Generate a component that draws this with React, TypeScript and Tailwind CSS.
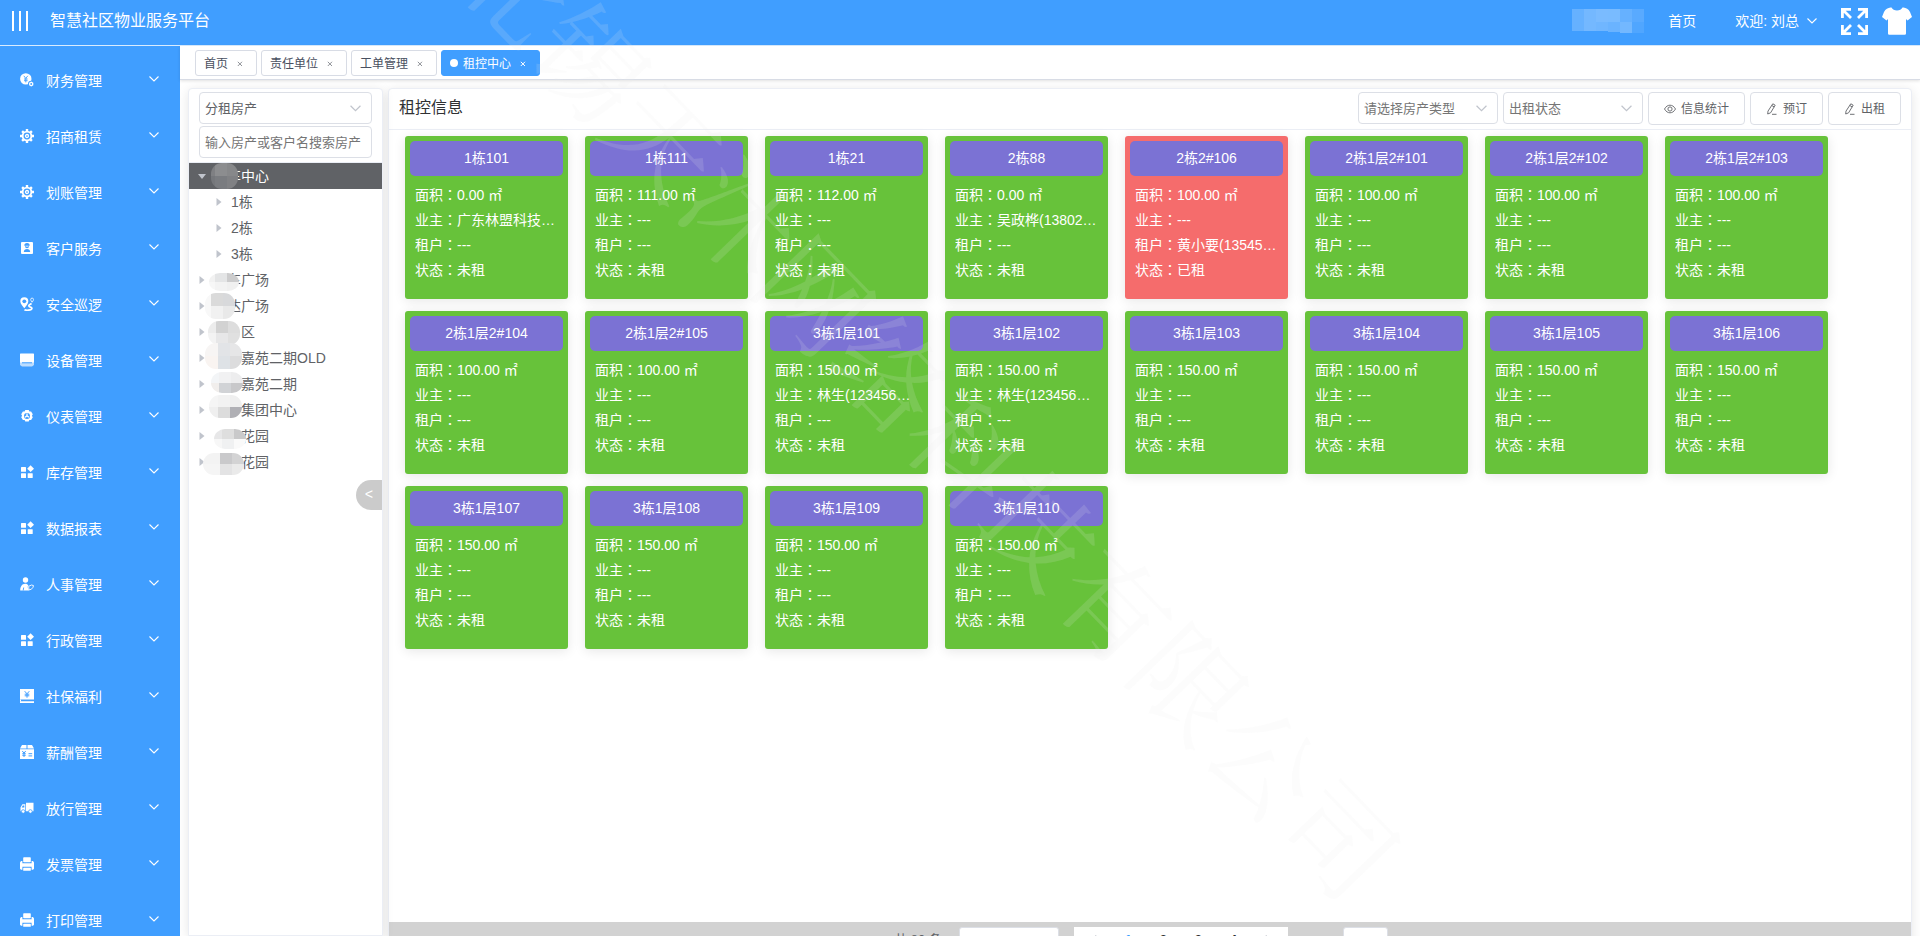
import React from 'react';

type IconName =
  | 'finance' | 'gear' | 'customer' | 'patrol' | 'device' | 'meter' | 'blocks'
  | 'staff' | 'welfare' | 'salary' | 'truck' | 'printer';

const BLUE = '#409eff';

const shapes: Record<IconName, React.ReactNode> = {
  finance: (
    <>
      <circle cx="5.8" cy="5.9" r="5.7" />
      <path d="M3.8 2.8l2 2.6 2-2.6M5.8 5.4v4M4 6h3.6M4 7.7h3.6" stroke={BLUE} strokeWidth="0.9" fill="none" />
      <circle cx="11.2" cy="11" r="3.2" fill={BLUE} />
      <path d="M11.2 8.6l2.1 1.2v2.4l-2.1 1.2-2.1-1.2V9.8z" />
      <circle cx="11.2" cy="11" r="0.9" fill={BLUE} />
    </>
  ),
  gear: (
    <>
      <circle cx="7" cy="7" r="4.4" fill="none" stroke="currentColor" strokeWidth="1.9" />
      <path
        d="M7 0v2.4M7 11.6v2.4M0 7h2.4M11.6 7H14M2.1 2.1l1.6 1.6M10.3 10.3l1.6 1.6M2.1 11.9l1.6-1.6M10.3 3.7l1.6-1.6"
        stroke="currentColor"
        strokeWidth="2.4"
      />
      <circle cx="7" cy="7" r="1.5" fill="none" stroke="currentColor" strokeWidth="1.3" />
    </>
  ),
  customer: (
    <>
      <rect x="1" y="1" width="12" height="12" rx="1" />
      <circle cx="7" cy="5.3" r="2" fill={BLUE} />
      <path d="M4.3 4.8a2.7 2.7 0 015.4 0M3.8 11c0-2 1.4-3 3.2-3s3.2 1 3.2 3z" fill={BLUE} />
      <path d="M5.5 5.2h3" stroke="currentColor" strokeWidth="0.8" />
    </>
  ),
  patrol: (
    <>
      <path d="M4.3 0.3a4 4 0 014 4c0 2.6-2.6 5.2-4 6.9-1.4-1.7-4-4.3-4-6.9a4 4 0 014-4z" />
      <circle cx="4.3" cy="4.3" r="1.9" fill={BLUE} />
      <path d="M4.5 12.6c1 .9 7 1 7.4-1 .3-1.9-3.2-1.1-3.1-2.9.1-1 1.5-1.3 2.8-2.2" fill="none" stroke="currentColor" strokeWidth="1.7" />
      <path d="M12.1 5.2c-.8-1-1.4-1.7-1.4-2.7a1.4 1.4 0 012.8 0c0 1-.6 1.7-1.4 2.7z" fill="none" stroke="currentColor" strokeWidth="0.8" />
    </>
  ),
  device: (
    <>
      <rect x="0" y="0.5" width="14" height="9" rx="0.6" />
      <path d="M0 9h14v3l-2 1.5H2L0 12z" opacity="0.65" />
      <path d="M2 9.8h10" stroke={BLUE} strokeWidth="1" />
    </>
  ),
  meter: (
    <>
      <path d="M5.3 1h3.4l.7 1.5 1.7-.1 1.7 2.9-.9 1.4.9 1.5-1.7 2.9-1.7-.1-.7 1.6H5.3l-.7-1.6-1.7.1-1.7-2.9.9-1.5-.9-1.4 1.7-2.9 1.7.1z" />
      <circle cx="7" cy="6.9" r="3" fill={BLUE} />
      <path d="M7 4.6v2.6M7 6.9l2 1.3M7 6.9L4.9 8.2" stroke="currentColor" strokeWidth="1.3" />
    </>
  ),
  blocks: (
    <>
      <rect x="1" y="2" width="5" height="4.8" rx="0.5" />
      <rect x="1" y="8.3" width="5" height="4.7" rx="0.5" />
      <rect x="7.7" y="8.3" width="5" height="4.7" rx="0.5" />
      <path d="M10.6 0.3l3.4 3.4-3.4 3.4-3.4-3.4z" />
    </>
  ),
  staff: (
    <>
      <circle cx="5.5" cy="3" r="2.7" />
      <path d="M0.2 13.5c0-4 1.8-6.8 5-6.8 1.5 0 2.4.6 3.2 1.5l-.8 1.7 1.6 3.6z" />
      <path d="M3.2 13.5l.5-3" stroke={BLUE} strokeWidth="0.9" />
      <path d="M8.6 9.3l3-1.3 1.9.6-.5 1.7-1.7 2-2.3.6z" fill="none" stroke="currentColor" strokeWidth="0.9" />
    </>
  ),
  welfare: (
    <>
      <path d="M0 0h14v10.5H0zM0 12.2h14V14H0z" />
      <path d="M0.5 10.5v2" stroke="currentColor" />
      <path d="M4.7 2.2L7 4.8l2.3-2.6M7 4.8v3.9M4.7 5.2h4.6M4.7 6.8h4.6" fill="none" stroke={BLUE} strokeWidth="1" />
    </>
  ),
  salary: (
    <>
      <path d="M2 0h4.5v3.5H0zM7.5 0H12l2 3.5H7.5zM0 4.2h14V14H0z" />
      <path d="M2.3 6l1.7 2.2L5.7 6M4 8.2V12M2.3 8.7h3.4M2.3 10.3h3.4M8.5 8.7h3.7M8.5 10.9h3.7" fill="none" stroke={BLUE} strokeWidth="1" />
    </>
  ),
  truck: (
    <>
      <path d="M6 1.8h7.5v8.5H6zM5.3 3.2v7.1H0.5V6.4l1.9-3.2z" />
      <path d="M2.8 4.5h1.5v2H1.7z" fill={BLUE} />
      <circle cx="3.2" cy="10.5" r="1.8" fill="currentColor" stroke={BLUE} strokeWidth="0.8" />
      <circle cx="10.4" cy="10.5" r="1.8" fill="currentColor" stroke={BLUE} strokeWidth="0.8" />
    </>
  ),
  printer: (
    <>
      <rect x="3.2" y="0.3" width="7.6" height="5" rx="0.8" />
      <path d="M1 4h1.4v2.2h9.2V4H13l1 1.5v6.3l-1 .9h-1.4V9.8H2.4v2.9H1l-1-.9V5.5z" />
      <rect x="3.2" y="10.8" width="7.6" height="3" rx="0.6" />
    </>
  ),
};

function MenuIcon({ name }: { name: IconName }) {
  return (
    <svg viewBox="0 0 14 14" className="h-3.5 w-3.5 shrink-0" fill="currentColor" aria-hidden="true">
      {shapes[name]}
    </svg>
  );
}

function Chevron({ className }: { className: string }) {
  return (
    <svg viewBox="0 0 10 6" className={className} fill="none" stroke="currentColor" strokeWidth="1.1" aria-hidden="true">
      <path d="M0.5 0.5L5 5l4.5-4.5" />
    </svg>
  );
}

const menu: [string, IconName][] = [
  ['财务管理', 'finance'],
  ['招商租赁', 'gear'],
  ['划账管理', 'gear'],
  ['客户服务', 'customer'],
  ['安全巡逻', 'patrol'],
  ['设备管理', 'device'],
  ['仪表管理', 'meter'],
  ['库存管理', 'blocks'],
  ['数据报表', 'blocks'],
  ['人事管理', 'staff'],
  ['行政管理', 'blocks'],
  ['社保福利', 'welfare'],
  ['薪酬管理', 'salary'],
  ['放行管理', 'truck'],
  ['发票管理', 'printer'],
  ['打印管理', 'printer'],
];

const tabs = ['首页', '责任单位', '工单管理', '租控中心'];

type Blob = { x: number; w: number; y: number; h: number; cells: [string, string, string, string, string, string] };
type Site = { name: string; covered?: string; blob: Blob };

const center: Site = {
  name: '中心',
  covered: '车',
  blob: { x: -2, w: 27, y: 0, h: 26, cells: ['#7f8083', '#8c8d8f', '#87888a', '#75777b', '#7a7c80', '#808184'] },
};

const sites: Site[] = [
  { name: '广场', covered: '车', blob: { x: -4, w: 30, y: 6, h: 18, cells: ['#f2f2f2', '#e4e5e6', '#cccccd', '#f7f7f7', '#f3f3f3', '#f0f0f0'] } },
  { name: '广场', covered: '达', blob: { x: -8, w: 30, y: 0, h: 26, cells: ['#f8f8f8', '#dadada', '#d8d9db', '#f8f8f8', '#f1f1f1', '#e9e9e9'] } },
  { name: '区', blob: { x: -5, w: 32, y: 2, h: 24, cells: ['#ececec', '#d2d2d2', '#dddddd', '#f3f3f3', '#e7e7e8', '#e0e0e0'] } },
  { name: '嘉苑二期OLD', blob: { x: -8, w: 37, y: -2, h: 26, cells: ['#f7f5f4', '#e2e4e7', '#e6e6e7', '#f9f4f1', '#dee2e6', '#dcdcdd'] } },
  { name: '嘉苑二期', blob: { x: -2, w: 32, y: 1, h: 21, cells: ['#f3f5f7', '#f1f1f2', '#ededee', '#f1eeec', '#d1d3d6', '#c8c8ca'] } },
  { name: '集团中心', blob: { x: -4, w: 33, y: -2, h: 23, cells: ['#f5f5f5', '#f2f2f2', '#efefef', '#efefef', '#dcdcdc', '#b0b0b5'] } },
  { name: '花园', blob: { x: 1, w: 32, y: 6, h: 20, cells: ['#e7e7e8', '#dedede', '#c9c9ca', '#f7f7f7', '#f0f1f2', '#fafafa'] } },
  { name: '花园', blob: { x: -10, w: 41, y: 4, h: 22, cells: ['#f3f3f3', '#c9c9cb', '#d3d3d4', '#f5f5f5', '#e3e3e4', '#eaeaea'] } },
];

function SiteName({ id, site }: { id: string; site: Site }) {
  const { x, w, y, h, cells } = site.blob;
  const first = Math.max(w - 24, 4);
  const cols = [[x, first], [x + first, 12], [x + first + 12, w - first - 12]];
  const split = Math.round(h / 2);
  return (
    <span className="ml-[7px] flex items-center">
      <svg className="relative z-10 h-[26px] w-7 shrink-0 overflow-visible" viewBox="0 0 28 26" aria-hidden="true">
        <clipPath id={id}>
          <rect x={x} y={y} width={w} height={h} rx="11" />
        </clipPath>
        <g clipPath={`url(#${id})`}>
          {cells.map((fill, i) => (
            <rect
              key={i}
              x={cols[i % 3][0]}
              y={i < 3 ? y : y + split}
              width={cols[i % 3][1]}
              height={i < 3 ? split : h - split}
              fill={fill}
            />
          ))}
        </g>
      </svg>
      {site.covered && <span className="-ml-3.5">{site.covered}</span>}
      <span>{site.name}</span>
    </span>
  );
}

function Caret({ open }: { open?: boolean }) {
  return (
    <svg viewBox="0 0 8 8" className="h-2 w-2 shrink-0" fill="#c0c4cc" aria-hidden="true">
      {open ? <path d="M0 2h8L4 7z" /> : <path d="M1.5 0v8L6.5 4z" />}
    </svg>
  );
}

type Room = { name: string; area: string; owner?: string; tenant?: string; rented?: boolean };

const rooms: Room[] = [
  { name: '1栋101', area: '0.00', owner: '广东林盟科技有限公司' },
  { name: '1栋111', area: '111.00' },
  { name: '1栋21', area: '112.00' },
  { name: '2栋88', area: '0.00', owner: '吴政桦(13802000000)' },
  { name: '2栋2#106', area: '100.00', tenant: '黄小要(13545000000)', rented: true },
  { name: '2栋1层2#101', area: '100.00' },
  { name: '2栋1层2#102', area: '100.00' },
  { name: '2栋1层2#103', area: '100.00' },
  { name: '2栋1层2#104', area: '100.00' },
  { name: '2栋1层2#105', area: '100.00' },
  { name: '3栋1层101', area: '150.00', owner: '林生(12345678900)' },
  { name: '3栋1层102', area: '150.00', owner: '林生(12345678900)' },
  { name: '3栋1层103', area: '150.00' },
  { name: '3栋1层104', area: '150.00' },
  { name: '3栋1层105', area: '150.00' },
  { name: '3栋1层106', area: '150.00' },
  { name: '3栋1层107', area: '150.00' },
  { name: '3栋1层108', area: '150.00' },
  { name: '3栋1层109', area: '150.00' },
  { name: '3栋1层110', area: '150.00' },
];

function Field({ label, value }: { label: string; value: string }) {
  return (
    <p className="h-[25px] truncate">
      {label}
      <span className="font-['Noto_Sans_CJK_TC',sans-serif]">：</span>
      {value}
    </p>
  );
}

function RoomCard({ room }: { room: Room }) {
  return (
    <article
      className={`h-[163px] w-[163px] rounded-[3px] p-[5px] text-sm text-white shadow-[0_2px_12px_rgba(0,0,0,0.1)] ${
        room.rented ? 'bg-[#f56c6c]' : 'bg-[#67c23a]'
      }`}
    >
      <h3 className="h-[35px] rounded-[5px] bg-[#7b72d4] text-center leading-[35px]">{room.name}</h3>
      <div className="px-[5px] pt-[6px] leading-[25px]">
        <Field label="面积" value={`${room.area} ㎡`} />
        <Field label="业主" value={room.owner ?? '---'} />
        <Field label="租户" value={room.tenant ?? '---'} />
        <Field label="状态" value={room.rented ? '已租' : '未租'} />
      </div>
    </article>
  );
}

function SelectBox({ label, value, className, tone }: { label: string; value: string; className: string; tone: string }) {
  return (
    <div className={`relative h-8 ${className}`}>
      <select
        aria-label={label}
        className={`h-full w-full appearance-none rounded border border-[#dcdfe6] bg-white pl-[5px] pt-px text-[13px] outline-none ${tone}`}
      >
        <option>{value}</option>
      </select>
      <Chevron className="pointer-events-none absolute right-[11px] top-[13px] h-[7px] w-[11px] text-[#c0c4cc]" />
    </div>
  );
}

const PenIcon = () => (
  <svg viewBox="0 0 12 12" className="h-3 w-3" fill="none" stroke="currentColor" strokeWidth="0.9" aria-hidden="true">
    <path d="M6.8 0.8l2.4 1.4-4.6 7.6-2.9 1.2.3-2.9zM5.8 2.5l2.4 1.4M6 11.3h4.5" />
  </svg>
);

const EyeIcon = () => (
  <svg viewBox="0 0 12 12" className="h-3 w-3" fill="none" stroke="currentColor" strokeWidth="0.9" aria-hidden="true">
    <path d="M0.5 6C2 3.3 4 2.2 6 2.2S10 3.3 11.5 6C10 8.7 8 9.8 6 9.8S2 8.7 0.5 6z" />
    <circle cx="6" cy="6" r="2.1" />
  </svg>
);

function ToolButton({ icon, text }: { icon: React.ReactNode; text: string }) {
  return (
    <button type="button" className="flex h-[33px] items-center gap-[5px] rounded border border-[#dcdfe6] bg-white px-[15px] text-xs text-[#606266]">
      {icon}
      <span>{text}</span>
    </button>
  );
}

function Header() {
  return (
    <header className="flex h-[46px] shrink-0 items-center border-b border-[#d9ecff] bg-[#409eff] pb-[3px] pl-3 pr-2 text-white">
      <button type="button" aria-label="折叠菜单" className="h-5 w-4">
        <svg viewBox="0 0 16 20" className="h-5 w-4" fill="none" stroke="currentColor" strokeWidth="2" aria-hidden="true">
          <path d="M1 0v20M8 0v20M15 0v20" />
        </svg>
      </button>
      <h1 className="ml-[22px] text-base leading-[22px]">智慧社区物业服务平台</h1>
      <div className="ml-auto flex items-center text-sm leading-5">
        <svg viewBox="0 0 72 24" className="h-6 w-[72px]" aria-hidden="true">
          <rect width="12" height="22" fill="#66b1ff" />
          <rect x="12" width="12" height="22" fill="#74b8ff" />
          <rect x="24" width="12" height="13" fill="#7abbff" />
          <rect x="24" y="13" width="12" height="9" fill="#70b6ff" />
          <rect x="36" width="12" height="13" fill="#79bbff" />
          <rect x="36" y="13" width="12" height="10" fill="#6ab3ff" />
          <rect x="48" width="12" height="13" fill="#66b1ff" />
          <rect x="48" y="13" width="12" height="11" fill="#73b8ff" />
          <rect x="60" width="12" height="13" fill="#59aaff" />
          <rect x="60" y="13" width="12" height="11" fill="#50a6ff" />
        </svg>
        <a href="#home" className="ml-6">首页</a>
        <button type="button" className="ml-[39px] flex items-center gap-2">
          <span>欢迎: 刘总</span>
          <Chevron className="h-[6px] w-[10px]" />
        </button>
        <button type="button" aria-label="全屏" className="ml-6">
          <svg viewBox="0 0 27 27" className="h-[27px] w-[27px]" fill="none" stroke="currentColor" strokeWidth="2.8" aria-hidden="true">
            <path d="M1.4 10V1.4H10M2 2l8 8M17 1.4h8.600V10M25 2l-8 8M1.4 17v8.600H10M2 25l8-8M25.600 17v8.600H17M25 25l-8-8" />
          </svg>
        </button>
        <button type="button" aria-label="主题" className="ml-[14px]">
          <svg viewBox="0 0 30 28" className="h-7 w-[30px]" fill="currentColor" aria-hidden="true">
            <path d="M9.5 0.5c1 2 3 3 5.500 3s4.500-1 5.500-3h1c2.500.5 5 1.500 6.500 4.500l2 5-4.500 3.500L24 12v14.500a1.300 1.300 0 01-1.300 1.300H7.300A1.300 1.300 0 016 26.500V12l-1.500 1.500L0 10l2-5C3.500 2 6 1 8.500.500z" />
          </svg>
        </button>
      </div>
    </header>
  );
}

function Sidebar() {
  return (
    <nav className="w-[180px] shrink-0 overflow-hidden bg-[#409eff] pt-[6px] text-white">
      <ul>
        {menu.map(([text, icon]) => (
          <li key={text}>
            <button type="button" className="flex h-14 w-full items-center gap-3 pl-5 pr-[21px] text-sm">
              <MenuIcon name={icon} />
              <span className="pt-0.5">{text}</span>
              <Chevron className="mb-[3px] ml-auto h-[6px] w-[10px]" />
            </button>
          </li>
        ))}
      </ul>
    </nav>
  );
}

function TabBar() {
  return (
    <div className="relative flex h-[34px] shrink-0 items-center gap-1 border-b border-[#d8dce5] bg-white pb-[3px] pl-[15px] pt-[4px] shadow-[0_1px_3px_rgba(0,0,0,0.12)]">
      {tabs.map((tab, i) => {
        const active = i === tabs.length - 1;
        return (
          <button
            key={tab}
            type="button"
            className={`flex h-[26px] items-center rounded-[3px] border px-2 text-xs ${
              active ? 'border-[#409eff] bg-[#409eff] text-white' : 'border-[#d8dce5] bg-white text-[#495060]'
            }`}
          >
            {active && <span className="mr-[5px] h-2 w-2 rounded-full bg-white" />}
            <span className="pt-px">{tab}</span>
            <svg viewBox="0 0 16 16" className={`ml-1 h-4 w-4 ${active ? 'text-white' : 'text-[#909399]'}`} fill="none" stroke="currentColor" aria-hidden="true">
              <path d="M5.8 6.8l4.2 4.2M10 6.8l-4.2 4.2" />
            </svg>
          </button>
        );
      })}
    </div>
  );
}

function TreePanel() {
  return (
    <aside className="relative w-[195px] shrink-0 rounded-t border border-[#ebeef5] bg-white text-[#606266] shadow-[0_2px_12px_rgba(0,0,0,0.1)]">
      <div className="flex flex-col gap-0.5 border-b border-[#ebeef5] px-[10px] pb-1 pt-[3px]">
        <SelectBox label="房产类别" value="分租房产" className="w-full" tone="text-[#606266]" />
        <input
          aria-label="搜索房产"
          placeholder="输入房产或客户名搜索房产"
          className="h-8 w-full rounded border border-[#dcdfe6] px-[5px] text-[13px] outline-none placeholder:text-[#757575]"
        />
      </div>
      <ul className="text-sm leading-[26px]">
        <li>
          <div className="flex h-[26px] items-center bg-[#606266] pl-[9px] text-white">
            <Caret open />
            <SiteName id="site-center" site={center} />
          </div>
          <ul>
            {['1栋', '2栋', '3栋'].map((b) => (
              <li key={b} className="flex h-[26px] items-center gap-2 pl-[26px]">
                <Caret />
                <span>{b}</span>
              </li>
            ))}
          </ul>
        </li>
        {sites.map((s, i) => (
          <li key={i} className="flex h-[26px] items-center pl-[9px]">
            <Caret />
            <SiteName id={`site-${i}`} site={s} />
          </li>
        ))}
      </ul>
      <button
        type="button"
        aria-label="收起"
        className="absolute right-0 top-[391px] h-[30px] w-[26px] rounded-l-full bg-[#cbcbcb] font-mono text-sm text-white"
      >
        &lt;
      </button>
    </aside>
  );
}

function Pagination() {
  return (
    <footer className="flex h-[42px] shrink-0 items-start justify-center bg-[#d2d2d2] pr-[18px] pt-[5px] text-[13px] leading-[26px] text-[#606266]">
      <span className="mr-[17px]">共 80 条</span>
      <select aria-label="每页条数" className="mr-[15px] h-8 w-[100px] appearance-none rounded-[3px] border border-[#dcdfe6] bg-white text-center text-xs">
        <option>20条/页</option>
      </select>
      <div className="mr-[55px] flex h-[30px] bg-white px-0.5 font-bold text-[#303133]">
        <button type="button" aria-label="上一页" className="flex h-[26px] w-[35px] items-center justify-center text-[#c0c4cc]">
          <Chevron className="h-[7px] w-[11px] rotate-90" />
        </button>
        {[1, 2, 3, 4].map((n) => (
          <button key={n} type="button" className={`h-[26px] w-[35px] ${n === 1 ? 'text-[#409eff]' : ''}`}>
            {n}
          </button>
        ))}
        <button type="button" aria-label="下一页" className="flex h-[26px] w-[35px] items-center justify-center text-[#c0c4cc]">
          <Chevron className="h-[7px] w-[11px] -rotate-90" />
        </button>
      </div>
      <input aria-label="页码" defaultValue="1" className="h-8 w-[45px] rounded-[3px] border border-[#dcdfe6] bg-white text-center text-xs" />
    </footer>
  );
}

function ControlPanel() {
  return (
    <section className="flex min-h-[calc(100vh-59px)] min-w-0 flex-1 flex-col rounded-t border border-[#ebeef5] bg-white shadow-[0_2px_12px_rgba(0,0,0,0.1)]">
      <div className="flex h-[41px] shrink-0 items-start border-b border-[#ebeef5] pl-[10px] pr-[10px] pt-[3px]">
        <h2 className="text-base leading-8 text-[#303133]">租控信息</h2>
        <div className="ml-auto flex items-start gap-[5px]">
          <SelectBox label="房产类型" value="请选择房产类型" className="w-[140px]" tone="text-[#757575]" />
          <SelectBox label="出租状态" value="出租状态" className="w-[140px]" tone="text-[#757575]" />
          <ToolButton icon={<EyeIcon />} text="信息统计" />
          <ToolButton icon={<PenIcon />} text="预订" />
          <ToolButton icon={<PenIcon />} text="出租" />
        </div>
      </div>
      <div className="flex flex-1 flex-wrap content-start gap-x-[17px] gap-y-3 px-4 pt-[6px]">
        {rooms.map((room) => (
          <RoomCard key={room.name} room={room} />
        ))}
      </div>
      <Pagination />
    </section>
  );
}

export default function App() {
  return (
    <div className="relative flex h-screen flex-col overflow-hidden bg-white font-['Liberation_Sans','Noto_Sans_CJK_SC',sans-serif]">
      <Header />
      <div className="flex min-h-0 flex-1">
        <Sidebar />
        <div className="flex min-w-0 flex-1 flex-col">
          <TabBar />
          <main className="flex min-h-0 flex-1 gap-[5px] overflow-hidden pl-2 pr-2 pt-2">
            <TreePanel />
            <ControlPanel />
          </main>
        </div>
      </div>
      <div
        aria-hidden="true"
        className="pointer-events-none absolute left-[931px] top-[409px] z-20 -translate-x-1/2 -translate-y-1/2 rotate-46 whitespace-nowrap font-['Noto_Serif_CJK_SC','Noto_Sans_CJK_SC',serif] text-[108px] leading-none text-[#ebebeb]/15"
      >
        北锡天沐网络科技有限公司
      </div>
    </div>
  );
}
